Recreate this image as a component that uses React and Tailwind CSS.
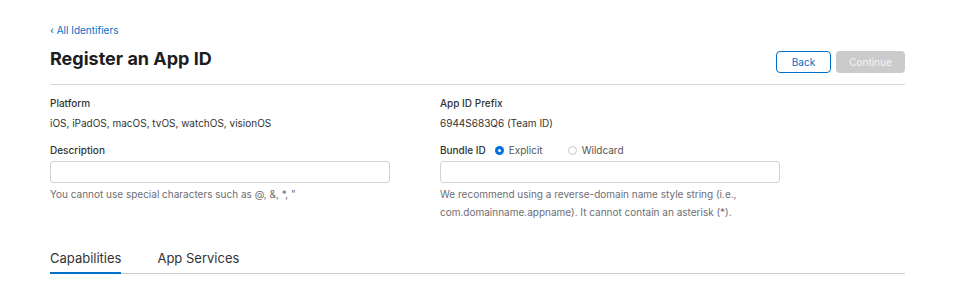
import React from 'react';

// Register App ID form header
function Field({ label, children }) {
  return (
    <div>
      <div className="text-[10px] leading-[14px] text-[#333] font-medium">{label}</div>
      {children}
    </div>
  );
}

export default function App() {
  return (
    <div className="w-[979px] h-[289px] bg-white overflow-hidden" style={{ fontFamily: 'Inter, "Liberation Sans", sans-serif' }}>
      <div className="ml-[50px] w-[855px] pt-[23px]">
        <a className="block text-[10px] leading-[14px] text-[#0070c9]">‹ All Identifiers</a>

        <div className="flex items-start justify-between mt-[14px] pb-[11px] border-b border-[#d6d6d6]">
          <h1 className="text-[18px] leading-[22px] font-bold text-[#1d1d1f] -mt-[3px]">Register an App ID</h1>
          <div className="flex gap-[5px]">
            <button className="w-[55px] h-[22px] rounded-[4px] border border-[#0070c9] text-[10px] text-[#0070c9] bg-white">Back</button>
            <button className="w-[69px] h-[22px] rounded-[4px] bg-[#cbcbcb] text-[10px] text-[#f4f4f4]">Continue</button>
          </div>
        </div>

        <div className="grid grid-cols-[390px_1fr] mt-[11px]">
          <div>
            <Field label="Platform">
              <div className="text-[10px] leading-[14px] text-[#333] mt-[6px]">iOS, iPadOS, macOS, tvOS, watchOS, visionOS</div>
            </Field>
            <div className="mt-[13px]">
              <Field label="Description">
                <input className="block mt-[4px] w-[340px] h-[22px] border border-[#d2d2d2] rounded-[3px] outline-none" />
                <div className="text-[10px] leading-[14px] text-[#6e6e73] mt-[4px]">You cannot use special characters such as @, &amp;, *, "</div>
              </Field>
            </div>
          </div>
          <div>
            <Field label="App ID Prefix">
              <div className="text-[10px] leading-[14px] text-[#333] mt-[6px]">6944S683Q6 (Team ID)</div>
            </Field>
            <div className="mt-[13px]">
              <div className="flex items-center text-[10px] leading-[14px] text-[#333]">
                <span className="font-medium">Bundle ID</span>
                <span className="ml-[9px] w-[9px] h-[9px] rounded-full bg-[#0071e3] flex items-center justify-center">
                  <span className="w-[3px] h-[3px] rounded-full bg-white" />
                </span>
                <span className="ml-[5px] text-[#555]">Explicit</span>
                <span className="ml-[25px] w-[9px] h-[9px] rounded-full border border-[#c8c8c8]" />
                <span className="ml-[5px] text-[#555]">Wildcard</span>
              </div>
              <input className="block mt-[4px] w-[340px] h-[22px] border border-[#d2d2d2] rounded-[3px] outline-none" />
              <div className="text-[10px] leading-[18px] text-[#6e6e73] mt-[2px] w-[340px]">
                We recommend using a reverse-domain name style string (i.e., com.domainname.appname). It cannot contain an asterisk (*).
              </div>
            </div>
          </div>
        </div>

        <div className="flex mt-[28px] border-b border-[#cfcfcf]">
          <div className="text-[13px] leading-[18px] text-[#333] pb-[5px] border-b-2 border-[#0070c9] -mb-px">Capabilities</div>
          <div className="text-[13px] leading-[18px] text-[#333] ml-[36px]">App Services</div>
        </div>
      </div>
    </div>
  );
}
